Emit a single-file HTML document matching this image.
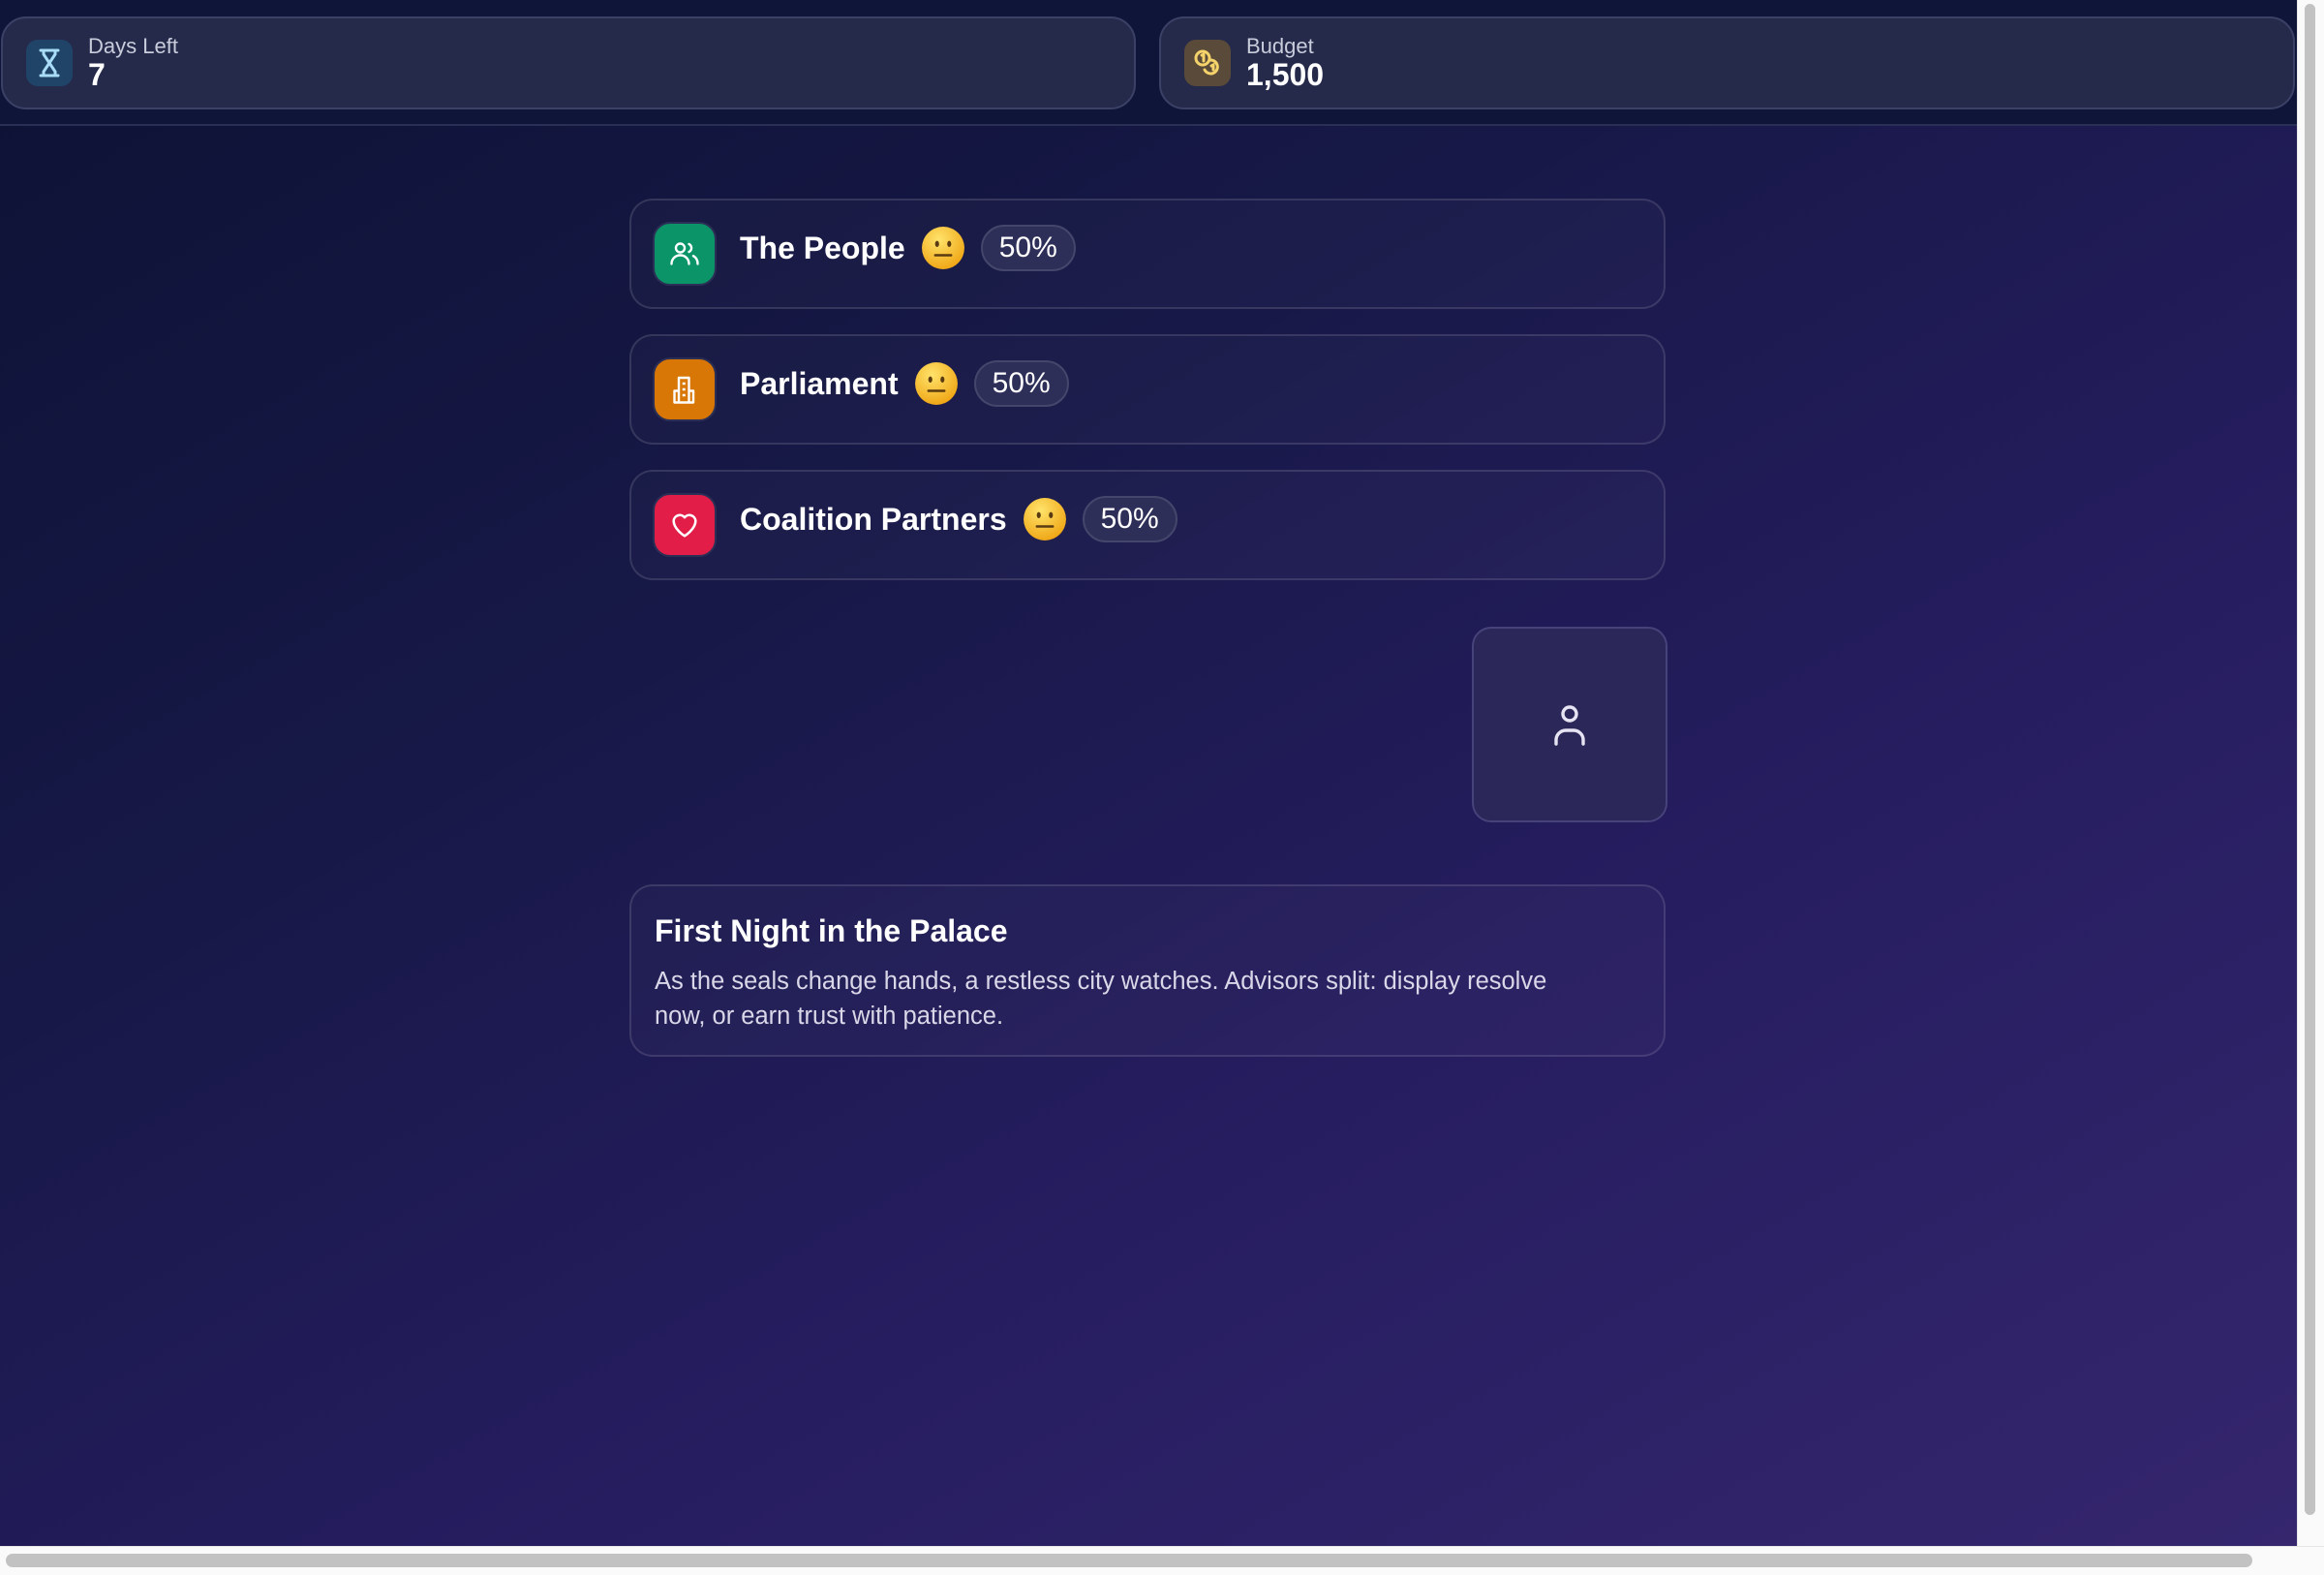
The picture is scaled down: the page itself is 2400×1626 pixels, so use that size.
<!DOCTYPE html>
<html><head><meta charset="utf-8"><style>
*{box-sizing:border-box;margin:0;padding:0}
html,body{width:2400px;height:1626px;overflow:hidden;font-family:"Liberation Sans",sans-serif;color:#fff}
body{background:#fff;position:relative}
.page{position:absolute;left:0;top:0;width:2372px;height:1596px;background:linear-gradient(150deg,#0d1234 0%,#171847 35%,#261d60 65%,#35266e 100%)}
.top{position:absolute;left:0;top:0;width:2372px;height:130px;background:#0f1538;border-bottom:2px solid #2a2f55}
.stat{position:absolute;top:17px;height:96px;border-radius:26px;background:#252a4b;border:2px solid #3b4166}
.ib{position:absolute;left:24px;top:22px;width:48px;height:48px;border-radius:12px}
.lbl{position:absolute;left:88px;top:16px;font-size:22px;color:#c9ccdb}
.val{position:absolute;left:88px;top:40px;font-size:32px;font-weight:bold}
.card{position:absolute;left:650px;width:1070px;border-radius:24px;background:rgba(255,255,255,0.025);border:2px solid rgba(255,255,255,0.12)}
.row{height:114px}
.ic{position:absolute;left:22px;top:22px;width:66px;height:66px;border-radius:18px;border:2px solid #2b2f55;display:flex;align-items:center;justify-content:center}
.nm{position:absolute;left:112px;top:25px;font-size:32px;font-weight:bold;white-space:nowrap;display:flex;align-items:center}
.emo{margin-left:16px;width:46px;height:46px}
.bd{margin-left:16px;height:48px;padding:0 17px;border-radius:24px;background:#2e2f58;border:2px solid #44466c;font-size:30px;font-weight:normal;line-height:44px}
</style></head><body>
<div class="page">
<div class="top">
 <div class="stat" style="left:1px;width:1172px">
  <div class="ib" style="background:#1f4468"><svg width="48" height="48" viewBox="0 0 48 48" fill="none" stroke="#a8dcf7" stroke-width="3" stroke-linecap="round"><path d="M15 11h18M15 37h18M18 11v4l12 18v4M30 11v4L18 33v4"/></svg></div>
  <div class="lbl">Days Left</div><div class="val">7</div>
 </div>
 <div class="stat" style="left:1197px;width:1173px">
  <div class="ib" style="background:#5a4a3a"><svg width="48" height="48" viewBox="0 0 48 48" fill="none" stroke="#f5d36a" stroke-width="3" stroke-linecap="round"><circle cx="19" cy="19" r="7"/><path d="M18 16l2-1v7"/><path d="M27 21a7 7 0 1 1-6 10"/><path d="M28 27l2-1v5"/></svg></div>
  <div class="lbl">Budget</div><div class="val">1,500</div>
 </div>
</div>

<div class="card row" style="top:205px">
 <div class="ic" style="background:#0a9467"><svg width="36" height="36" viewBox="0 0 24 24" fill="none" stroke="#fff" stroke-width="1.6" stroke-linecap="round"><circle cx="9" cy="8" r="3"/><path d="M3 19c0-3.5 2.7-6 6-6s6 2.5 6 6"/><path d="M15 5.3a3 3 0 0 1 0 5.4M18 13.5c1.8.9 3 2.9 3 5.5"/></svg></div>
 <div class="nm">The People<svg class="emo" viewBox="0 0 44 44"><defs><radialGradient id="g" cx="40%" cy="30%" r="70%"><stop offset="0" stop-color="#ffe36b"/><stop offset="1" stop-color="#f0a818"/></radialGradient></defs><circle cx="22" cy="22" r="21" fill="url(#g)"/><ellipse cx="16" cy="18" rx="2" ry="3" fill="#5a3a10"/><ellipse cx="28" cy="18" rx="2" ry="3" fill="#5a3a10"/><rect x="13" y="28" width="18" height="2.4" rx="1" fill="#5a3a10"/></svg><span class="bd">50%</span></div>
</div>
<div class="card row" style="top:345px">
 <div class="ic" style="background:#d97706"><svg width="36" height="36" viewBox="0 0 24 24" fill="none" stroke="#fff" stroke-width="1.6" stroke-linejoin="round"><path d="M8 21V4h7v17M8 21H5v-8h3M15 21h3v-8h-3M5 21h13M10.5 8h2M10.5 12h2M10.5 16h2"/></svg></div>
 <div class="nm">Parliament<svg class="emo" viewBox="0 0 44 44"><circle cx="22" cy="22" r="21" fill="url(#g)"/><ellipse cx="16" cy="18" rx="2" ry="3" fill="#5a3a10"/><ellipse cx="28" cy="18" rx="2" ry="3" fill="#5a3a10"/><rect x="13" y="28" width="18" height="2.4" rx="1" fill="#5a3a10"/></svg><span class="bd">50%</span></div>
</div>
<div class="card row" style="top:485px">
 <div class="ic" style="background:#e11d48"><svg width="34" height="34" viewBox="0 0 24 24" fill="none" stroke="#fff" stroke-width="1.8" stroke-linejoin="round"><path d="M12 20s-8-5-8-11a4.5 4.5 0 0 1 8-2.5A4.5 4.5 0 0 1 20 9c0 6-8 11-8 11z"/></svg></div>
 <div class="nm">Coalition Partners<svg class="emo" viewBox="0 0 44 44"><circle cx="22" cy="22" r="21" fill="url(#g)"/><ellipse cx="16" cy="18" rx="2" ry="3" fill="#5a3a10"/><ellipse cx="28" cy="18" rx="2" ry="3" fill="#5a3a10"/><rect x="13" y="28" width="18" height="2.4" rx="1" fill="#5a3a10"/></svg><span class="bd">50%</span></div>
</div>

<div style="position:absolute;left:1520px;top:647px;width:202px;height:202px;border-radius:20px;background:#2b2759;border:2px solid #46427a;display:flex;align-items:center;justify-content:center">
 <svg width="44" height="48" viewBox="0 0 44 48" fill="none" stroke="#e6e3f2" stroke-width="3.4" stroke-linecap="round"><circle cx="22" cy="13" r="7"/><path d="M8 44v-4a10 10 0 0 1 10-10h8a10 10 0 0 1 10 10v4"/></svg>
</div>

<div class="card" style="top:913px;height:178px">
 <div style="position:absolute;left:24px;top:28px;font-size:32px;font-weight:bold">First Night in the Palace</div>
 <div style="position:absolute;left:24px;top:80px;width:1000px;font-size:25.5px;line-height:36px;color:#d9d7e8">As the seals change hands, a restless city watches. Advisors split: display resolve<br>now, or earn trust with patience.</div>
</div>
</div>
<div style="position:absolute;left:2372px;top:0;width:28px;height:1626px;background:#fafafa;border-left:1px solid #e5e5e5"></div>
<div style="position:absolute;left:2380px;top:4px;width:11px;height:1560px;border-radius:6px;background:#c2c2c2"></div>
<div style="position:absolute;left:0;top:1596px;width:2400px;height:30px;background:#fafafa;border-top:1px solid #e5e5e5"></div>
<div style="position:absolute;left:6px;top:1604px;width:2320px;height:14px;border-radius:7px;background:#c2c2c2"></div>
</body></html>
